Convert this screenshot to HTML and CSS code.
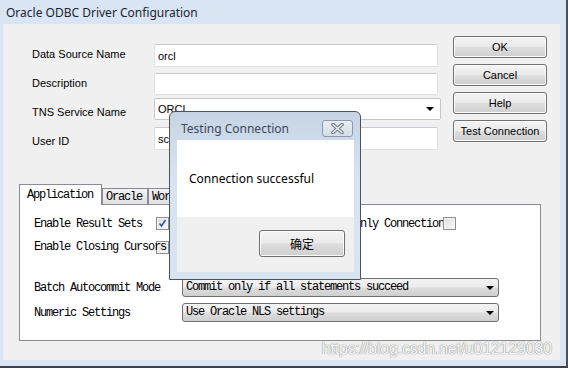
FILE: index.html
```html
<!DOCTYPE html>
<html lang="en">
<head>
    <meta charset="UTF-8">
    <title>Oracle ODBC Driver Configuration</title>
    <link rel="stylesheet" href="styles.css">
</head>
<body>
    <div class="window">
        <div class="titlebar">Oracle ODBC Driver Configuration</div>

        <div class="client">
            <div class="top">
                <div class="fields">
                    <div class="row r1">
                        <span class="label">Data Source Name</span>
                        <div class="edit">orcl</div>
                    </div>
                    <div class="row r2">
                        <span class="label">Description</span>
                        <div class="edit"></div>
                    </div>
                    <div class="row r3">
                        <span class="label">TNS Service Name</span>
                        <div class="edit combo-edit">ORCL<span class="arrow"></span></div>
                    </div>
                    <div class="row r4">
                        <span class="label">User ID</span>
                        <div class="edit">scott</div>
                    </div>
                </div>

                <div class="buttons">
                    <div class="btn">OK</div>
                    <div class="btn">Cancel</div>
                    <div class="btn">Help</div>
                    <div class="btn">Test Connection</div>
                </div>
            </div>

            <div class="tabs">
                <div class="tabstrip">
                    <div class="tab active">Application</div>
                    <div class="tab">Oracle</div>
                    <div class="tab">Workarounds</div>
                </div>
                <div class="panel">
                    <div class="prow p1">
                        <span class="plabel">Enable Result Sets</span>
                        <span class="check checked">
                            <svg width="9" height="9" viewBox="0 0 9 9"><path d="M1.5 4.5 L3.5 7 L7.5 1" fill="none" stroke="#3c4fa8" stroke-width="1.6"/></svg>
                        </span>
                        <span class="plabel right">Read-Only Connection</span>
                        <span class="check"></span>
                    </div>
                    <div class="prow p2">
                        <span class="check under"></span>
                        <span class="plabel over">Enable Closing Cursors</span>
                    </div>
                    <div class="prow p3">
                        <span class="plabel wide">Batch Autocommit Mode</span>
                        <div class="combo">Commit only if all statements succeed<span class="arrow"></span></div>
                    </div>
                    <div class="prow p4">
                        <span class="plabel wide">Numeric Settings</span>
                        <div class="combo">Use Oracle NLS settings<span class="arrow"></span></div>
                    </div>
                </div>
            </div>
        </div>

        <!-- modal over the main window -->
        <div class="dialog">
            <div class="dlg-title">
                <span>Testing Connection</span>
                <span class="close">
                    <svg width="15" height="11" viewBox="0 0 15 11">
                        <path d="M3 1.5 L12 9.5 M12 1.5 L3 9.5" stroke="#6b7583" stroke-width="3.6" stroke-linecap="round"/>
                        <path d="M3 1.5 L12 9.5 M12 1.5 L3 9.5" stroke="#eef2f6" stroke-width="1.6" stroke-linecap="round"/>
                    </svg>
                </span>
            </div>
            <div class="dlg-client">
                <div class="dlg-msg">Connection successful</div>
                <div class="dlg-foot">
                    <div class="btn dlg-btn">确定</div>
                </div>
            </div>
        </div>

        <div class="watermark">https://blog.csdn.net/u012129030</div>
    </div>
</body>
</html>
```

FILE: styles.css
```css
/* window frame */
body {
    margin: 0;
    padding: 0;
    width: 568px;
    height: 368px;
    overflow: hidden;
    font-family: "Liberation Sans", Arial, sans-serif;
    font-size: 11px;
    color: #000000;
}

.window {
    position: relative;
    width: 568px;
    height: 368px;
    box-sizing: border-box;
    background-color: #d9e5f3;
    border-right: 2px solid #4a4f57;
    border-bottom: 2px solid #3e4248;
    padding: 0 6px 0 3px;
}

.titlebar {
    height: 24px;
    line-height: 25px;
    margin-left: 3px;
    font-family: "Noto Sans", "Open Sans", sans-serif;
    font-size: 12px;
    color: #1b2430;
}

.client {
    height: 336px;
    background-color: #f0f0f0;
    overflow: hidden;
}

/* top form */
.top {
    display: flex;
    align-items: flex-start;
}

.fields {
    width: 409px;
    margin: 20px 0 0 29px;
}

.row {
    display: flex;
    align-items: center;
}

.r1 { height: 23px; margin-bottom: 6px; }
.r2 { height: 22px; margin-bottom: 3px; }
.r3 { height: 22px; margin-bottom: 7px; }
.r4 { height: 23px; }

.label {
    width: 122px;
    flex: none;
}

.r1 .label,
.r2 .label { margin-top: -3px; }
.r3 .label,
.r4 .label { margin-top: 5px; }

.edit {
    position: relative;
    width: 284px;
    height: 100%;
    box-sizing: border-box;
    background-color: #ffffff;
    border: 1px solid #dde1e6;
    border-top-color: #c7cbd1;
    border-radius: 2px;
    padding: 0 3px;
    display: flex;
    align-items: center;
}

.combo-edit {
    width: 287px;
    border-color: #c3c6cb;
}

.arrow {
    position: absolute;
    right: 6px;
    top: 50%;
    margin-top: -2px;
    width: 0;
    height: 0;
    border-left: 4px solid transparent;
    border-right: 4px solid transparent;
    border-top: 4px solid #000000;
}

.buttons {
    margin: 12px 0 0 12px;
    display: flex;
    flex-direction: column;
    gap: 6px;
}

.btn {
    width: 94px;
    height: 22px;
    box-sizing: border-box;
    border: 1px solid #707070;
    border-radius: 3px;
    background: linear-gradient(#f3f3f3 0%, #ebebeb 48%, #dddddd 52%, #cfcfcf 100%);
    box-shadow: inset 0 0 0 1px #fbfbfb;
    display: flex;
    align-items: center;
    justify-content: center;
}

/* tab control */
.tabs {
    margin: 34px 0 0 16px;
    width: 522px;
}

.tabstrip {
    display: flex;
    align-items: flex-end;
    height: 20px;
}

.tab,
.plabel,
.combo {
    font-family: "Liberation Mono", "Courier New", monospace;
    font-size: 12px;
    letter-spacing: -1.2px;
    white-space: nowrap;
}

.tab {
    height: 16px;
    box-sizing: border-box;
    border: 1px solid #898c95;
    border-bottom: none;
    background: linear-gradient(#f2f2f2, #e1e1e1);
    padding: 0 5px 0 3px;
    line-height: 16px;
}

.tab.active {
    position: relative;
    z-index: 1;
    height: 21px;
    margin-bottom: -1px;
    background: #ffffff;
    padding: 0 8px 0 7px;
    line-height: 20px;
}

.panel {
    height: 137px;
    box-sizing: border-box;
    border: 1px solid #898c95;
    background-color: #ffffff;
    padding-left: 14px;
}

.prow {
    display: flex;
    align-items: center;
    position: relative;
}

.p1 { height: 13px; margin-top: 12px; }
.p2 { height: 13px; margin-top: 11px; }
.p3 { height: 19px; margin-top: 24px; }
.p4 { height: 19px; margin-top: 6px; }

.plabel {
    width: 122px;
    flex: none;
}

.plabel.right {
    width: 119px;
    margin-left: 155px;
}

.plabel.wide {
    width: 148px;
}

.plabel.over {
    position: absolute;
    left: 0;
    top: 0;
    line-height: 13px;
}

.check {
    width: 13px;
    height: 13px;
    flex: none;
    box-sizing: border-box;
    border: 1px solid #8e8f8f;
    background: linear-gradient(135deg, #dcdcdc, #fbfbfb);
    box-shadow: inset 0 0 0 1px #f4f4f4;
    display: flex;
    align-items: center;
    justify-content: center;
}

.check.under {
    margin-left: 122px;
}

.combo {
    position: relative;
    width: 317px;
    height: 19px;
    box-sizing: border-box;
    border: 1px solid #707070;
    border-radius: 3px;
    background: linear-gradient(#f3f3f3 0%, #ebebeb 48%, #dddddd 52%, #cfcfcf 100%);
    padding-left: 3px;
    line-height: 17px;
}

.combo .arrow {
    right: 4px;
}

/* Testing Connection dialog */
.dialog {
    position: absolute;
    left: 169px;
    top: 111px;
    width: 192px;
    height: 169px;
    box-sizing: border-box;
    border: 1px solid #4b5360;
    border-radius: 6px 6px 0 0;
    background: linear-gradient(#c6d4e5, #d8e3f0 40%, #d9e4f1);
    padding: 0 6px 0 7px;
}

.dlg-title {
    height: 28px;
    display: flex;
    align-items: center;
    justify-content: space-between;
    padding-left: 4px;
    font-family: "Noto Sans", "Open Sans", sans-serif;
    font-size: 12px;
    color: #3d4a5b;
}

.dlg-title > span:first-child {
    margin-top: 4px;
}

.close {
    width: 31px;
    height: 17px;
    box-sizing: border-box;
    border: 1px solid #8d99a9;
    border-radius: 3px;
    background: linear-gradient(#e9eef4, #d3dce7);
    margin: 5px 1px 0 0;
    display: flex;
    align-items: center;
    justify-content: center;
}

.dlg-client {
    height: 132px;
    display: flex;
    flex-direction: column;
}

.dlg-msg {
    height: 77px;
    background-color: #ffffff;
    padding-left: 12px;
    line-height: 78px;
    font-family: "Noto Sans", "Open Sans", sans-serif;
    font-size: 12px;
    color: #000000;
}

.dlg-foot {
    flex: 1;
    background-color: #f0f0f0;
    display: flex;
    justify-content: flex-end;
    align-items: flex-start;
    padding: 13px 9px 0 0;
}

.dlg-btn {
    width: 86px;
    height: 27px;
    font-family: "Noto Sans CJK SC", sans-serif;
    font-size: 12px;
}

.watermark {
    position: absolute;
    right: 14px;
    top: 340px;
    font-family: "Liberation Sans", Arial, sans-serif;
    font-size: 16px;
    letter-spacing: -0.2px;
    color: #f8f8f8;
    text-shadow: 0 0 1px #8a8a8a, 0 0 1px #8a8a8a;
}
```
